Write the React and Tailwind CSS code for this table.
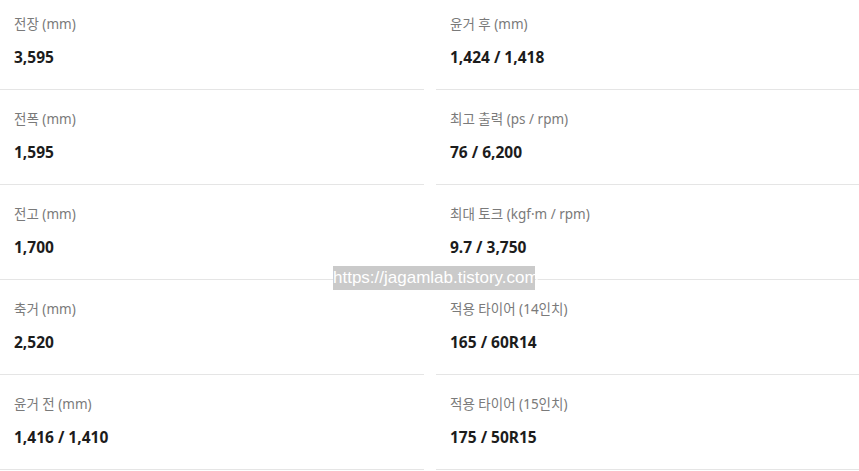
import React from "react";

const left = [
  ["전장 (mm)", "3,595"],
  ["전폭 (mm)", "1,595"],
  ["전고 (mm)", "1,700"],
  ["축거 (mm)", "2,520"],
  ["윤거 전 (mm)", "1,416 / 1,410"],
];
const right = [
  ["윤거 후 (mm)", "1,424 / 1,418"],
  ["최고 출력 (ps / rpm)", "76 / 6,200"],
  ["최대 토크 (kgf·m / rpm)", "9.7 / 3,750"],
  ["적용 타이어 (14인치)", "165 / 60R14"],
  ["적용 타이어 (15인치)", "175 / 50R15"],
];

function Cell({ label, value }) {
  return (
    <div className="h-[95px] border-b border-[#e5e5e5] pl-[14px] pt-[19px] flex flex-col">
      <div className="h-[20px] leading-[20px] text-[13.5px] text-[#7a7a7a]">{label}</div>
      <div className="mt-[12px] h-[22px] leading-[22px] text-[15.5px] font-bold text-[#1c1c1c]">{value}</div>
    </div>
  );
}

export default function App() {
  return (
    <div
      className="relative w-[859px] h-[471px] bg-white overflow-hidden"
      style={{ fontFamily: '"Noto Sans", "Noto Sans CJK KR", sans-serif' }}
    >
      <div className="-mt-[5px] grid grid-cols-[424px_423px] gap-x-[12px]">
        <div className="flex flex-col">
          {left.map(([l, v]) => (
            <Cell key={l} label={l} value={v} />
          ))}
        </div>
        <div className="flex flex-col">
          {right.map(([l, v]) => (
            <Cell key={l} label={l} value={v} />
          ))}
        </div>
      </div>
      <div
        className="absolute left-[333px] top-[266px] w-[202px] h-[24px] bg-[#c4c4c4]/90 text-white text-[17px] leading-[24px] text-center whitespace-nowrap"
        style={{ fontFamily: '"Liberation Sans", Arial, sans-serif' }}
      >
        https://jagamlab.tistory.com
      </div>
    </div>
  );
}
